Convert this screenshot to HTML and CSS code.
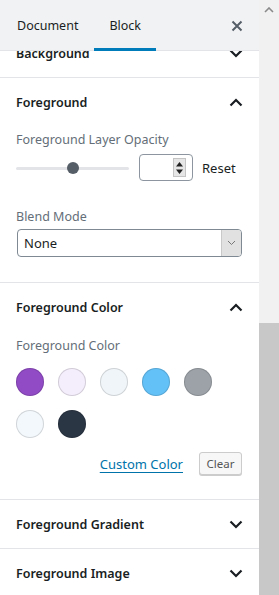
FILE: index.html
```html
<!DOCTYPE html>
<html>
<head>
<meta charset="utf-8">
<link rel="stylesheet" href="styles.css">
</head>
<body>
<div class="app">
  <div class="panel">
    <div class="tabs">
      <div class="tab">Document</div>
      <div class="tab active">Block</div>
      <div class="close">
        <svg width="12" height="12" viewBox="0 0 12 12"><path d="M1.5 1.5 L10.5 10.5 M10.5 1.5 L1.5 10.5" stroke="#555d66" stroke-width="2" fill="none"/></svg>
      </div>
    </div>
    <div class="scroller">
      <div class="content">
        <div class="section">
          <div class="sec-head"><span>Background</span><svg class="chev" width="14" height="9" viewBox="0 0 14 9"><path d="M1.5 1.5 L7 7 L12.5 1.5" stroke="#191e23" stroke-width="2.2" fill="none"/></svg></div>
        </div>
        <div class="section">
          <div class="sec-head"><span>Foreground</span><svg class="chev" width="14" height="9" viewBox="0 0 14 9"><path d="M1.5 7.5 L7 2 L12.5 7.5" stroke="#191e23" stroke-width="2.2" fill="none"/></svg></div>
          <div class="sec-body fg-body">
            <div class="label">Foreground Layer Opacity</div>
            <div class="range-row">
              <div class="slider"><div class="track"></div><div class="thumb"></div></div>
              <div class="num">
                <div class="spin">
                  <svg width="9" height="16" viewBox="0 0 9 16"><path d="M4.5 2 L8 6.5 L1 6.5 Z M4.5 14 L8 9.5 L1 9.5 Z" fill="#222"/></svg>
                </div>
              </div>
              <div class="reset">Reset</div>
            </div>
            <div class="label blend">Blend Mode</div>
            <div class="select">
              <span>None</span>
              <div class="sel-btn"><svg width="9" height="6" viewBox="0 0 9 6"><path d="M1 1 L4.5 4.5 L8 1" stroke="#777" stroke-width="1" fill="none"/></svg></div>
            </div>
          </div>
        </div>
        <div class="section">
          <div class="sec-head"><span>Foreground Color</span><svg class="chev" width="14" height="9" viewBox="0 0 14 9"><path d="M1.5 7.5 L7 2 L12.5 7.5" stroke="#191e23" stroke-width="2.2" fill="none"/></svg></div>
          <div class="sec-body color-body">
            <div class="label">Foreground Color</div>
            <div class="swatches">
              <div class="sw" style="background:#914bc5"></div>
              <div class="sw" style="background:#f4edfb"></div>
              <div class="sw" style="background:#f0f5f9"></div>
              <div class="sw" style="background:#63c1f7"></div>
              <div class="sw" style="background:#9ca2a8"></div>
              <div class="sw" style="background:#f3f8fc"></div>
              <div class="sw" style="background:#2b3645"></div>
            </div>
            <div class="color-actions">
              <a class="custom">Custom Color</a>
              <div class="clear">Clear</div>
            </div>
          </div>
        </div>
        <div class="section">
          <div class="sec-head"><span>Foreground Gradient</span><svg class="chev" width="14" height="9" viewBox="0 0 14 9"><path d="M1.5 1.5 L7 7 L12.5 1.5" stroke="#191e23" stroke-width="2.2" fill="none"/></svg></div>
        </div>
        <div class="section">
          <div class="sec-head"><span>Foreground Image</span><svg class="chev" width="14" height="9" viewBox="0 0 14 9"><path d="M1.5 1.5 L7 7 L12.5 1.5" stroke="#191e23" stroke-width="2.2" fill="none"/></svg></div>
        </div>
      </div>
    </div>
  </div>
  <div class="scrollbar">
    <div class="sb-arrow"><svg width="10" height="6" viewBox="0 0 10 6"><path d="M1 5 L5 1 L9 5" stroke="#8a8a8a" stroke-width="1.6" fill="none"/></svg></div>
    <div class="sb-gap"></div>
    <div class="sb-thumb"></div>
  </div>
</div>
</body>
</html>
```
FILE: styles.css
```css
* { box-sizing: border-box; }
html, body { margin: 0; padding: 0; background: #fff; }
body { font-family: "Noto Sans", "Open Sans", sans-serif; font-size: 12.5px; color: #191e23; }
.app { display: flex; width: 279px; height: 595px; overflow: hidden; }
.panel { width: 259px; height: 595px; display: flex; flex-direction: column; overflow: hidden; }
.tabs { height: 51px; flex: none; background: #f1f2f4; border-bottom: 1px solid #e2e4e7; display: flex; align-items: stretch; position: relative; z-index: 1; }
.tab { padding: 3px 15px 0 17px; display: flex; align-items: center; font-size: 12.5px; color: #191e23; border-bottom: 3px solid transparent; margin-bottom: -1px; }
.tab.active { padding: 3px 15px 0 15px; margin-left: 1px; border-bottom-color: #007cba; }
.close { margin-left: auto; width: 44px; display: flex; align-items: center; justify-content: center; padding-top: 1px; }
.scroller { flex: 1; overflow: hidden; }
.content { margin-top: -22px; }
.section { border-bottom: 1px solid #e2e4e7; }
.sec-head { height: 48px; display: flex; align-items: center; justify-content: space-between; padding: 0 16px; font-weight: 600; font-size: 12.5px; }
.sec-body { padding: 0 16px; }
.label { color: #646e78; font-size: 12.5px; line-height: 18px; }
.fg-body { padding-top: 5px; padding-bottom: 25px; }
.range-row { display: flex; align-items: center; height: 27px; margin-top: 5px; }
.slider { position: relative; width: 113px; height: 14px; }
.track { position: absolute; left: 0; right: 0; top: 6px; height: 3px; border-radius: 2px; background: #e2e4e7; }
.thumb { position: absolute; left: 51px; top: 1px; width: 12px; height: 12px; border-radius: 50%; background: #555d66; }
.num { width: 54px; height: 27px; margin-left: 10px; border: 1px solid #8d96a0; border-radius: 4px; display: flex; align-items: center; justify-content: flex-end; padding-right: 6px; }
.spin { width: 13px; height: 19px; background: #e6e6e6; border: 1px solid #c4c4c4; display: flex; align-items: center; justify-content: center; }
.reset { margin-left: 9px; font-size: 13px; color: #191e23; }
.blend { margin-top: 27px; }
.select { margin-top: 3px; margin-left: 1px; width: 225px; height: 28px; border: 1px solid #7e8993; border-radius: 4px; display: flex; align-items: center; justify-content: space-between; padding-left: 6px; overflow: hidden; font-size: 13px; }
.sel-btn { width: 20px; height: 26px; background: #e1e1e1; border-left: 1px solid #c9c9c9; display: flex; align-items: center; justify-content: center; }
.color-body { padding-top: 6px; padding-bottom: 24px; }
.swatches { display: flex; flex-wrap: wrap; gap: 14px; margin-top: 13px; width: 220px; }
.sw { width: 28px; height: 28px; border-radius: 50%; box-shadow: inset 0 0 0 1px rgba(0,0,0,0.14); }
.color-actions { display: flex; justify-content: flex-end; align-items: center; margin-top: 14px; padding-right: 1px; }
.custom { color: #0073aa; text-decoration: underline; text-underline-offset: 3px; font-size: 13px; }
.clear { margin-left: 16px; width: 43px; height: 23px; border: 1px solid #ccc; border-radius: 3px; background: #f7f7f7; font-size: 11.5px; color: #555; display: flex; align-items: center; justify-content: center; box-shadow: 0 1px 0 #ccc; }
.scrollbar { width: 20px; height: 595px; background: #f1f1f1; display: flex; flex-direction: column; }
.sb-arrow { height: 17px; display: flex; align-items: center; justify-content: center; padding-top: 2px; }
.sb-gap { height: 306px; }
.sb-thumb { flex: 1; background: #c8c8c8; }
```
